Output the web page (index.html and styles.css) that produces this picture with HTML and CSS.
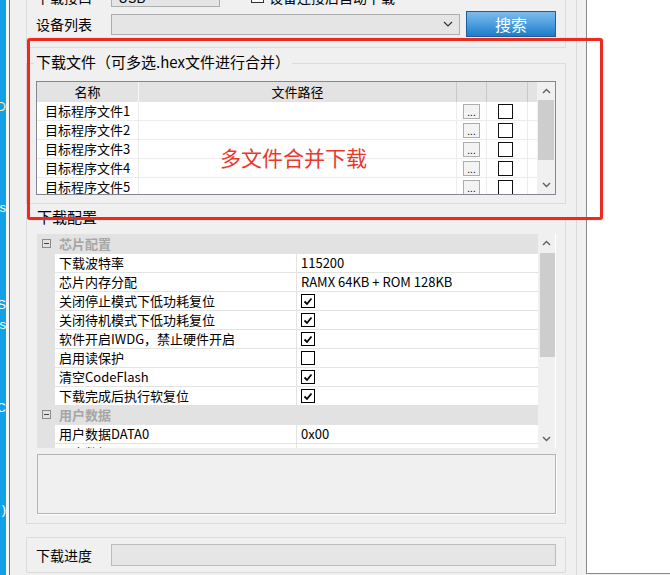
FILE: index.html
```html
<!DOCTYPE html>
<html>
<head>
  <meta charset="utf-8">
  <title>下载配置</title>
  <link rel="stylesheet" href="styles.css">
</head>
<body>
  <div class="screen">
    <div class="desktop">
      <div class="frag frag-1">D</div>
      <div class="frag frag-2">s</div>
      <div class="frag frag-3">S</div>
      <div class="frag frag-4">is</div>
      <div class="frag frag-5">C</div>
      <div class="frag frag-6">(</div>
    </div>
    <div class="win-edge"></div>

    <div class="main">
      <div class="group top-group">
        <div class="form-row row-cut">
          <span class="field-label">下载接口</span>
          <div class="combo combo-short"><span>USB</span></div>
          <span class="opt-check"></span>
          <span class="check-label">设备连接后自动下载</span>
        </div>
        <div class="form-row row-main">
          <span class="field-label">设备列表</span>
          <div class="combo combo-long">
            <span></span>
            <svg width="10" height="6" viewBox="0 0 10 6"><polyline points="1,1 5,5 9,1" fill="none" stroke="#333" stroke-width="1.2"/></svg>
          </div>
          <button class="btn-search">搜索</button>
        </div>
      </div>

      <div class="group file-group">
        <div class="group-title">下载文件（可多选.hex文件进行合并）</div>
        <div class="file-table">
          <div class="table-main">
            <div class="t-row t-head">
              <div class="t-cell">名称</div>
              <div class="t-cell">文件路径</div>
              <div class="t-cell"></div>
              <div class="t-cell"></div>
              <div class="t-cell"></div>
            </div>
            <div class="t-row">
              <div class="t-cell">目标程序文件1</div>
              <div class="t-cell"></div>
              <div class="t-cell"><span class="dots">...</span></div>
              <div class="t-cell"><span class="box"></span></div>
              <div class="t-cell"></div>
            </div>
            <div class="t-row">
              <div class="t-cell">目标程序文件2</div>
              <div class="t-cell"></div>
              <div class="t-cell"><span class="dots">...</span></div>
              <div class="t-cell"><span class="box"></span></div>
              <div class="t-cell"></div>
            </div>
            <div class="t-row">
              <div class="t-cell">目标程序文件3</div>
              <div class="t-cell"></div>
              <div class="t-cell"><span class="dots">...</span></div>
              <div class="t-cell"><span class="box"></span></div>
              <div class="t-cell"></div>
            </div>
            <div class="t-row">
              <div class="t-cell">目标程序文件4</div>
              <div class="t-cell"></div>
              <div class="t-cell"><span class="dots">...</span></div>
              <div class="t-cell"><span class="box"></span></div>
              <div class="t-cell"></div>
            </div>
            <div class="t-row">
              <div class="t-cell">目标程序文件5</div>
              <div class="t-cell"></div>
              <div class="t-cell"><span class="dots">...</span></div>
              <div class="t-cell"><span class="box"></span></div>
              <div class="t-cell"></div>
            </div>
          </div>
          <div class="vscroll vscroll-table">
            <div class="vs-arrow"><svg width="9" height="6" viewBox="0 0 9 6"><polyline points="1,5 4.5,1.5 8,5" fill="none" stroke="#606060" stroke-width="1.4"/></svg></div>
            <div class="vs-thumb thumb-table"></div>
            <div class="vs-fill"></div>
            <div class="vs-arrow"><svg width="9" height="6" viewBox="0 0 9 6"><polyline points="1,1 4.5,4.5 8,1" fill="none" stroke="#606060" stroke-width="1.4"/></svg></div>
          </div>
        </div>
      </div>

      <div class="group config-group">
        <div class="group-title">下载配置</div>
        <div class="prop-grid">
          <div class="prop-list">
            <div class="prop-row prop-cat">
              <div class="gutter"><svg width="9" height="9" viewBox="0 0 9 9"><rect x="0.5" y="0.5" width="8" height="8" fill="none" stroke="#8a8a8a"/><line x1="2" y1="4.5" x2="7" y2="4.5" stroke="#444"/></svg></div>
              <div class="cat-name">芯片配置</div>
            </div>
            <div class="prop-row">
              <div class="gutter"></div>
              <div class="p-name">下载波特率</div>
              <div class="p-value">115200</div>
            </div>
            <div class="prop-row">
              <div class="gutter"></div>
              <div class="p-name">芯片内存分配</div>
              <div class="p-value">RAMX 64KB + ROM 128KB</div>
            </div>
            <div class="prop-row">
              <div class="gutter"></div>
              <div class="p-name">关闭停止模式下低功耗复位</div>
              <div class="p-value"><span class="cb"><svg width="10" height="9" viewBox="0 0 10 9"><path d="M1.5 4.5 L4 7 L8.5 1.5" fill="none" stroke="#000" stroke-width="1.8"/></svg></span></div>
            </div>
            <div class="prop-row">
              <div class="gutter"></div>
              <div class="p-name">关闭待机模式下低功耗复位</div>
              <div class="p-value"><span class="cb"><svg width="10" height="9" viewBox="0 0 10 9"><path d="M1.5 4.5 L4 7 L8.5 1.5" fill="none" stroke="#000" stroke-width="1.8"/></svg></span></div>
            </div>
            <div class="prop-row">
              <div class="gutter"></div>
              <div class="p-name">软件开启IWDG，禁止硬件开启</div>
              <div class="p-value"><span class="cb"><svg width="10" height="9" viewBox="0 0 10 9"><path d="M1.5 4.5 L4 7 L8.5 1.5" fill="none" stroke="#000" stroke-width="1.8"/></svg></span></div>
            </div>
            <div class="prop-row">
              <div class="gutter"></div>
              <div class="p-name">启用读保护</div>
              <div class="p-value"><span class="cb"></span></div>
            </div>
            <div class="prop-row">
              <div class="gutter"></div>
              <div class="p-name">清空CodeFlash</div>
              <div class="p-value"><span class="cb"><svg width="10" height="9" viewBox="0 0 10 9"><path d="M1.5 4.5 L4 7 L8.5 1.5" fill="none" stroke="#000" stroke-width="1.8"/></svg></span></div>
            </div>
            <div class="prop-row">
              <div class="gutter"></div>
              <div class="p-name">下载完成后执行软复位</div>
              <div class="p-value"><span class="cb"><svg width="10" height="9" viewBox="0 0 10 9"><path d="M1.5 4.5 L4 7 L8.5 1.5" fill="none" stroke="#000" stroke-width="1.8"/></svg></span></div>
            </div>
            <div class="prop-row prop-cat">
              <div class="gutter"><svg width="9" height="9" viewBox="0 0 9 9"><rect x="0.5" y="0.5" width="8" height="8" fill="none" stroke="#8a8a8a"/><line x1="2" y1="4.5" x2="7" y2="4.5" stroke="#444"/></svg></div>
              <div class="cat-name">用户数据</div>
            </div>
            <div class="prop-row">
              <div class="gutter"></div>
              <div class="p-name">用户数据DATA0</div>
              <div class="p-value">0x00</div>
            </div>
            <div class="prop-row">
              <div class="gutter"></div>
              <div class="p-name">用户数据DATA1</div>
              <div class="p-value">0x00</div>
            </div>
          </div>
          <div class="vscroll vscroll-grid">
            <div class="vs-arrow"><svg width="9" height="6" viewBox="0 0 9 6"><polyline points="1,5 4.5,1.5 8,5" fill="none" stroke="#606060" stroke-width="1.4"/></svg></div>
            <div class="vs-thumb thumb-grid"></div>
            <div class="vs-fill"></div>
            <div class="vs-arrow"><svg width="9" height="6" viewBox="0 0 9 6"><polyline points="1,1 4.5,4.5 8,1" fill="none" stroke="#606060" stroke-width="1.4"/></svg></div>
          </div>
        </div>
        <div class="desc-box"></div>
      </div>

      <div class="group progress-group">
        <div class="form-row">
          <span class="field-label">下载进度</span>
          <div class="progress-bar"></div>
        </div>
      </div>
    </div>

    <div class="side"></div>

    <div class="note">
      <div class="note-text">多文件合并下载</div>
    </div>
  </div>
</body>
</html>
```
FILE: styles.css
```css
body {
  margin: 0;
  width: 670px;
  height: 575px;
  overflow: hidden;
  background-color: #f0f0f0;
  font-family: "Noto Sans CJK SC", sans-serif;
  font-size: 13px;
  color: #000;
}

.screen {
  position: relative;
  display: flex;
  height: 575px;
}

/* desktop behind the window */
.desktop {
  width: 6px;
  background-color: #12a1e6;
  display: flex;
  flex-direction: column;
  overflow: hidden;
}

.frag {
  direction: rtl;
  white-space: nowrap;
  overflow: hidden;
  width: 6px;
  color: #fff;
  font-family: "Liberation Sans", sans-serif;
  font-size: 13px;
  line-height: 14px;
}

.frag-1 { margin-top: 100px; color: #ffe7a6; }
.frag-2 { margin-top: 87px; }
.frag-3 { margin-top: 83px; }
.frag-4 { margin-top: 6px; }
.frag-5 { margin-top: 69px; }
.frag-6 { margin-top: 88px; }

.win-edge {
  width: 3px;
  background-color: #f7f7f7;
  border-right: 1px solid #6f6f6f;
}

.main {
  width: 567px;
  box-sizing: border-box;
  padding: 0 10px 0 16px;
  border-right: 1px solid #dadada;
}

.side {
  width: 84px;
  height: 574px;
  box-sizing: border-box;
  margin-left: 9px;
  background-color: #fff;
  border-left: 1px solid #8a8a8a;
  border-bottom: 1px solid #8a8a8a;
}

/* group boxes */
.group {
  border: 1px solid #dcdcdc;
  padding: 0 9px 8px;
}

.group-title {
  width: fit-content;
  height: 18px;
  line-height: 18px;
  margin: -11px 0 0 -2px;
  padding: 0 2px;
  background-color: #f0f0f0;
  font-size: 15px;
}

.top-group {
  margin-top: -15px;
  padding-bottom: 10px;
}

.form-row {
  display: flex;
  align-items: center;
}

.row-cut {
  height: 21px;
  margin-bottom: 4px;
}

.row-main {
  height: 26px;
}

.field-label {
  width: 75px;
  flex-shrink: 0;
  font-size: 14px;
}

.combo {
  height: 21px;
  box-sizing: border-box;
  border: 1px solid #adadad;
  background-color: #e5e5e5;
  display: flex;
  align-items: center;
  justify-content: space-between;
  padding: 0 6px;
  font-size: 14px;
}

.combo-short { width: 109px; }
.combo-long { width: 349px; }

.opt-check {
  width: 13px;
  height: 13px;
  box-sizing: border-box;
  margin-left: 31px;
  border: 1px solid #333;
  background-color: #fff;
}

.check-label {
  margin-left: 5px;
  font-size: 14px;
}

.btn-search {
  width: 90px;
  height: 26px;
  margin-left: 6px;
  padding: 0;
  border: 1px solid #1c5f9b;
  background: linear-gradient(#7dbbeb, #4d9fdf 50%, #1d7cc6);
  color: #fff;
  font-family: inherit;
  font-size: 16px;
  line-height: 22px;
}

/* file table */
.file-group {
  margin-top: 15px;
}

.file-table {
  margin-top: 10px;
  height: 114px;
  box-sizing: border-box;
  border: 1px solid #828790;
  background-color: #fff;
  display: flex;
  overflow: hidden;
}

.table-main {
  width: 500px;
}

.t-row {
  display: grid;
  grid-template-columns: 102px 318px 30px 41px 9px;
  height: 19px;
  box-sizing: border-box;
  border-bottom: 1px solid #ececec;
}

.t-head {
  height: 20px;
  border-bottom: 0;
  background-color: #e3e3e3;
}

.t-cell {
  box-sizing: border-box;
  border-right: 1px solid #ececec;
  display: flex;
  align-items: center;
  justify-content: center;
  line-height: 18px;
  white-space: nowrap;
}

.t-head .t-cell {
  border-right-color: #c9c9c9;
}

.t-head .t-cell:first-child {
  border-right-color: #f7f7f7;
}

.t-cell:last-child {
  border-right: 0;
}

.dots {
  width: 17px;
  height: 15px;
  box-sizing: border-box;
  border: 1px solid #adadad;
  background-color: #f3f3f3;
  font-family: "Liberation Sans", sans-serif;
  font-size: 10px;
  line-height: 16px;
  text-align: center;
  overflow: hidden;
}

.box {
  width: 15px;
  height: 15px;
  box-sizing: border-box;
  border: 1px solid #111;
  margin-right: 3px;
}

/* scrollbars */
.vscroll {
  display: flex;
  flex-direction: column;
  background-color: #f0f0f0;
}

.vscroll-table { width: 18px; }
.vscroll-grid { width: 17px; }

.vs-arrow {
  height: 18px;
  display: flex;
  align-items: center;
  justify-content: center;
}

.vs-thumb {
  background-color: #cdcdcd;
}

.thumb-table {
  height: 60px;
  margin: 0 1px;
}

.thumb-grid {
  height: 104px;
  margin: 1px 0 0 2px;
}

.vs-fill {
  flex: 1;
}

/* property grid */
.config-group {
  margin-top: 14px;
  padding: 0 9px 9px 10px;
}

.prop-grid {
  margin-top: 8px;
  height: 214px;
  display: flex;
  background-color: #fff;
  overflow: hidden;
}

.prop-list {
  width: 501px;
}

.prop-row {
  display: grid;
  grid-template-columns: 18px 242px 241px;
  height: 19px;
}

.gutter {
  background-color: #e2e2e2;
  display: flex;
  align-items: center;
  justify-content: center;
}

.prop-cat {
  background-color: #e2e2e2;
}

.cat-name {
  grid-column: 2 / 4;
  padding-left: 4px;
  line-height: 19px;
  font-weight: bold;
  color: #a6a6a6;
}

.p-name,
.p-value {
  box-sizing: border-box;
  border-top: 1px solid #e3e3e3;
  padding-left: 4px;
  line-height: 18px;
  white-space: nowrap;
  display: flex;
  align-items: center;
}

.p-name {
  border-right: 1px solid #e3e3e3;
}

.cb {
  width: 14px;
  height: 14px;
  box-sizing: border-box;
  border: 1px solid #000;
  background-color: #fff;
  display: flex;
  align-items: center;
  justify-content: center;
}

.desc-box {
  margin-top: 6px;
  height: 60px;
  box-sizing: border-box;
  border: 1px solid #b4b4b4;
  box-shadow: 1px 1px 0 #fff;
}

/* progress */
.progress-group {
  margin-top: 13px;
  padding: 6px 9px;
}

.progress-bar {
  flex: 1;
  height: 22px;
  box-sizing: border-box;
  border: 1px solid #bcbcbc;
  background-color: #e6e6e6;
}

/* red annotation over the file list */
.note {
  position: absolute;
  left: 27px;
  top: 38px;
  width: 576px;
  height: 182px;
  box-sizing: border-box;
  border: 3px solid #ec2a20;
  border-radius: 3px;
  box-shadow: 0 0 1px rgba(236, 42, 32, 0.6);
}

.note-text {
  position: absolute;
  left: 190px;
  top: 106px;
  font-size: 21px;
  line-height: 21px;
  color: #e8392c;
  white-space: nowrap;
}
```
